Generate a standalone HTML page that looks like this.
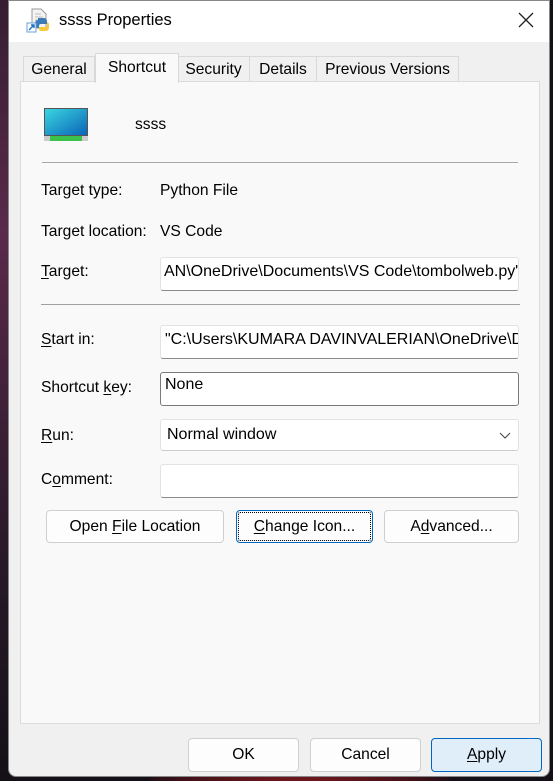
<!DOCTYPE html>
<html><head><style>
*{box-sizing:border-box;margin:0;padding:0}
html,body{width:553px;height:781px;overflow:hidden}
body{background:#1a1520;font-family:"Liberation Sans",sans-serif;font-size:15.6px;color:#000;position:relative}
.bg1{position:absolute;left:0;top:0;width:553px;height:781px;background:radial-gradient(ellipse at 0% 30%,#5a2a4a 0%,#2a1a2a 40%,#151018 70%),#151018}
.bg2{position:absolute;left:150px;top:740px;width:300px;height:60px;background:radial-gradient(ellipse at 50% 100%,#8a1a20,#401018 60%,transparent 80%)}
.win{position:absolute;left:8px;top:0;width:542px;height:777px;background:#f0f0f0;border-radius:0 0 8px 8px;overflow:hidden;border:1px solid #888}
.title{position:absolute;left:0;top:0;width:100%;height:41px;background:#fff}
.abs{position:absolute;white-space:nowrap}
.tab{position:absolute;top:55px;height:26px;border:1px solid #d9d9d9;border-bottom:none;background:#f0f0f0;padding:4px 0 0;text-align:center}
.panel{position:absolute;left:11px;top:80px;width:520px;height:643px;background:#f9f9f9;border:1px solid #dcdcdc}
.field{position:absolute;left:151px;width:359px;height:34px;background:#fff;border:1px solid #e3e3e3;border-bottom:1px solid #8a8a8a;border-radius:3px;padding:5px 4px;overflow:hidden;white-space:nowrap;font-size:16px}
.btn{position:absolute;height:33px;background:#fdfdfd;border:1px solid #cfcfcf;border-radius:4px;text-align:center;padding-top:7px;white-space:nowrap}
.sep{position:absolute;left:32px;width:476px;height:1px;background:#a0a0a0}
.lbl{position:absolute;left:32px;white-space:nowrap}
u{text-decoration:underline;text-underline-offset:2px}
</style></head><body>
<div class="bg1"></div><div class="bg2"></div>
<div class="win">
<div class="title">
<svg class="abs" style="left:17px;top:7px" width="26" height="26" viewBox="0 0 26 26">
<path d="M6 1h9l5 5v14H6z" fill="#f4f4f4" stroke="#9a9a9a"/>
<path d="M9 6h6M9 9h8M9 12h8" stroke="#bbb"/>
<path d="M12 10h6a3 3 0 0 1 3 3v3h-6a2 2 0 0 0-2 2v2h-2a2 2 0 0 1-2-2v-3a3 3 0 0 1 3-3z" fill="#3d7ab8"/>
<path d="M21 14h0a3 3 0 0 1 2 3v3a3 3 0 0 1-3 3h-5a2 2 0 0 1-2-2v-2h6a2 2 0 0 0 2-2z" fill="#f7c93c"/>
<rect x="1" y="15" width="9" height="9" fill="#fff" stroke="#6aa0d8"/>
<path d="M3 22l5-5M5 17h3v3" stroke="#1a6fc9" stroke-width="1.4" fill="none"/>
</svg>
<div class="abs" style="left:50px;top:10px;font-size:16.5px">ssss Properties</div>
<svg class="abs" style="left:508px;top:10px" width="18" height="18" viewBox="0 0 18 18"><path d="M2 2L16 16M16 2L2 16" stroke="#222" stroke-width="1.3"/></svg>
</div>
<div class="tab" style="left:14px;width:72px">General</div>
<div class="tab" style="left:168px;width:73px">Security</div>
<div class="tab" style="left:240px;width:68px">Details</div>
<div class="tab" style="left:307px;width:143px">Previous Versions</div>
<div class="panel">
<svg class="abs" style="left:23px;top:26px" width="44" height="33" viewBox="0 0 44 33">
<defs><linearGradient id="g" x1="0" y1="0" x2="1" y2="1"><stop offset="0" stop-color="#3ad8e0"/><stop offset="1" stop-color="#0a62b8"/></linearGradient></defs>
<rect x="0.5" y="0.5" width="43" height="27" fill="url(#g)" stroke="#555"/>
<rect x="0" y="28" width="44" height="5" fill="#ccc"/>
<rect x="6" y="28" width="32" height="5" fill="#3ac24a"/>
</svg>
<div class="abs" style="left:114px;top:34px">ssss</div>
<div class="sep" style="left:21px;top:80px;width:476px;background:#a8a8a8"></div>
</div>
<div class="tab" style="left:86px;top:52px;width:84px;height:30px;background:#f9f9f9;padding-top:5px">Shortcut</div>
<div style="position:absolute;left:11px;top:80px;width:520px;height:643px">
<div class="lbl" style="left:21px;top:101px">Target type:</div>
<div class="lbl" style="left:140px;top:101px">Python File</div>
<div class="lbl" style="left:21px;top:142px">Target location:</div>
<div class="lbl" style="left:140px;top:142px">VS Code</div>
<div class="lbl" style="left:21px;top:182px"><u>T</u>arget:</div>
<div class="field" style="left:140px;top:176px;width:359px;padding-left:3px">AN\OneDrive\Documents\VS Code\tombolweb.py"</div>
<div class="sep" style="left:21px;top:223px;width:479px"></div>
<div class="lbl" style="left:21px;top:250px"><u>S</u>tart in:</div>
<div class="field" style="left:140px;top:244px;width:359px">"C:\Users\KUMARA DAVINVALERIAN\OneDrive\Documents</div>
<div class="lbl" style="left:21px;top:298px">Shortcut <u>k</u>ey:</div>
<div class="field" style="left:140px;top:291px;width:359px;border:1px solid #7a7a7a;padding-top:3px">None</div>
<div class="lbl" style="left:21px;top:346px"><u>R</u>un:</div>
<div class="field" style="left:140px;top:338px;width:359px;height:32px;border-bottom-color:#ccc;padding:6px 6px">Normal window
<svg class="abs" style="left:338px;top:12px" width="12" height="8" viewBox="0 0 12 8"><path d="M1 1l5 5 5-5" stroke="#444" fill="none"/></svg></div>
<div class="lbl" style="left:21px;top:390px">C<u>o</u>mment:</div>
<div class="field" style="left:140px;top:383px;width:359px"></div>
<div class="btn" style="left:26px;top:429px;width:178px">Open <u>F</u>ile Location</div>
<div class="btn" style="left:216px;top:429px;width:137px;border:1px solid #0067c0;outline:1px dotted #000;outline-offset:-3px"><u>C</u>hange Icon...</div>
<div class="btn" style="left:364px;top:429px;width:135px">A<u>d</u>vanced...</div>
</div>
<div class="btn" style="left:179px;top:737px;width:111px;height:34px">OK</div>
<div class="btn" style="left:301px;top:737px;width:111px;height:34px">Cancel</div>
<div class="btn" style="left:422px;top:737px;width:111px;height:34px;background:#e0eef9;border-color:#0067c0"><u>A</u>pply</div>
</div>
</body></html>
